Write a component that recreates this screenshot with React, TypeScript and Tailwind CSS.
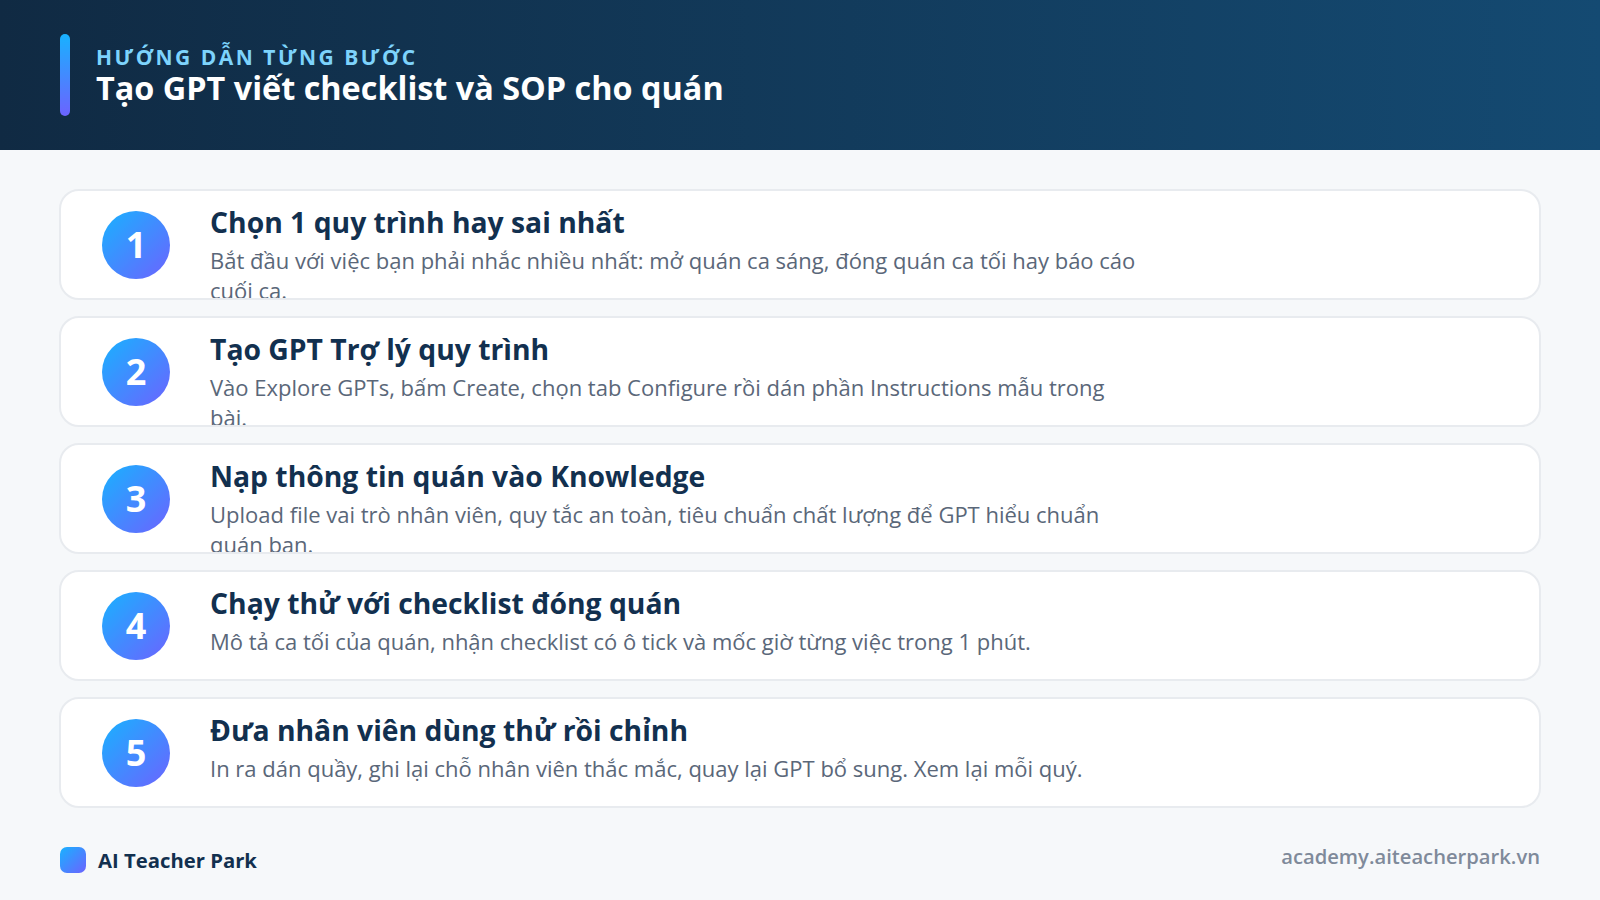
const steps = [
  {
    title: 'Chọn 1 quy trình hay sai nhất',
    desc: 'Bắt đầu với việc bạn phải nhắc nhiều nhất: mở quán ca sáng, đóng quán ca tối hay báo cáo cuối ca.',
  },
  {
    title: 'Tạo GPT Trợ lý quy trình',
    desc: 'Vào Explore GPTs, bấm Create, chọn tab Configure rồi dán phần Instructions mẫu trong bài.',
  },
  {
    title: 'Nạp thông tin quán vào Knowledge',
    desc: 'Upload file vai trò nhân viên, quy tắc an toàn, tiêu chuẩn chất lượng để GPT hiểu chuẩn quán bạn.',
  },
  {
    title: 'Chạy thử với checklist đóng quán',
    desc: 'Mô tả ca tối của quán, nhận checklist có ô tick và mốc giờ từng việc trong 1 phút.',
  },
  {
    title: 'Đưa nhân viên dùng thử rồi chỉnh',
    desc: 'In ra dán quầy, ghi lại chỗ nhân viên thắc mắc, quay lại GPT bổ sung. Xem lại mỗi quý.',
  },
];

export default function App() {
  return (
    <div className="flex h-[900px] w-[1600px] flex-col overflow-hidden bg-[#f6f8fa] font-['Open_Sans',sans-serif]">
      {/* Header */}
      <header className="flex h-[150px] shrink-0 items-center gap-[26px] bg-linear-to-r/srgb from-[#102a43] to-[#144a72] px-[60px]">
        <div className="h-[82px] w-[10px] rounded-[5px] bg-linear-to-b/srgb from-[#18b2ff] to-[#6c63ff]" />
        <div>
          <div className="text-[21px] leading-[24px] font-bold tracking-[2.5px] text-[#7dd3fc]">HƯỚNG DẪN TỪNG BƯỚC</div>
          <h1 className="text-[32.4px] leading-[36px] font-bold text-white">Tạo GPT viết checklist và SOP cho quán</h1>
        </div>
      </header>

      {/* Steps */}
      <main className="flex flex-col gap-[16px] px-[59px] pt-[39px]">
        {steps.map((step, i) => (
          <section
            key={step.title}
            className="flex h-[111px] items-center gap-[40px] overflow-hidden rounded-[20px] border-2 border-[#e8ebef] bg-white pl-[41px]"
          >
            <div className="flex h-[68px] w-[68px] shrink-0 items-center justify-center rounded-full bg-linear-to-br/srgb from-[#18b2ff] to-[#6c63ff] text-[36px] font-bold text-white">
              {i + 1}
            </div>
            <div className="h-full w-[930px] pt-[12px]">
              <h2 className="mb-[4px] text-[28.3px] leading-[38px] font-bold text-[#12304f]">{step.title}</h2>
              <p className="text-[22px] leading-[30px] text-[#5a6779]">{step.desc}</p>
            </div>
          </section>
        ))}
      </main>

      {/* Footer */}
      <footer className="flex items-center justify-between px-[60px] pt-[33px]">
        <div className="flex items-center gap-[12px]">
          <div className="h-[26px] w-[26px] rounded-[7px] bg-linear-to-br/srgb from-[#18b2ff] to-[#6c63ff]" />
          <span className="text-[20.3px] font-bold text-[#12304f]">AI Teacher Park</span>
        </div>
        <span className="mb-[8px] text-[20.2px] font-semibold text-[#7f8a9a]">academy.aiteacherpark.vn</span>
      </footer>
    </div>
  );
}
